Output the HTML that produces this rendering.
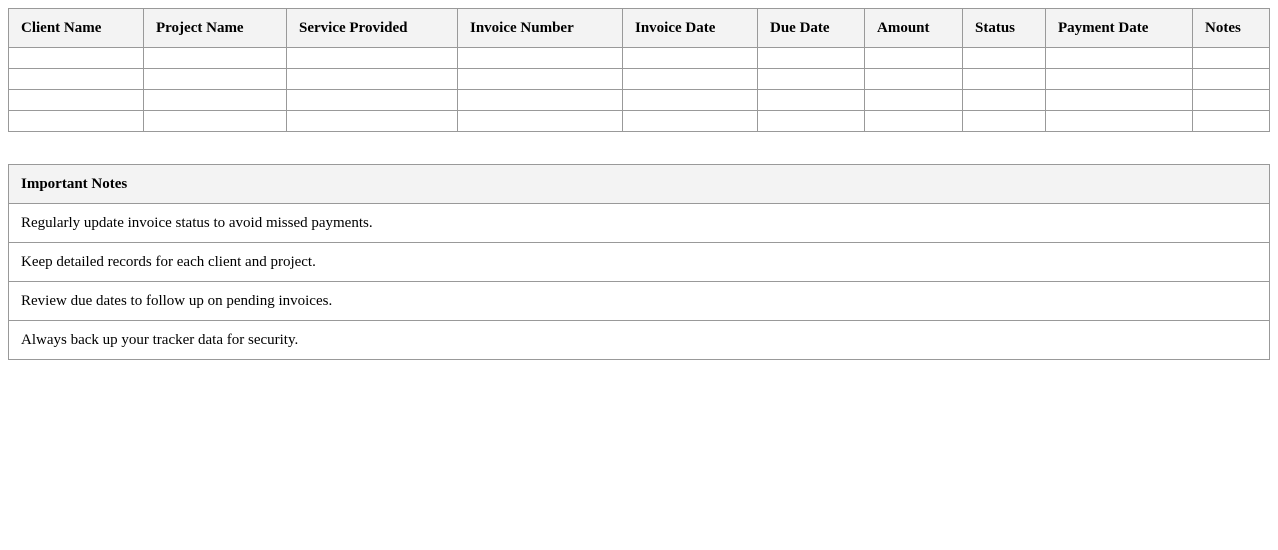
<!DOCTYPE html>
<html><head><meta charset="utf-8"><style>
body{margin:8px;font-family:"Liberation Serif",serif;font-size:15px;color:#000;background:#fff}
table{border-collapse:collapse;width:1261px;table-layout:fixed}
td,th{border:1px solid #999;padding:1px 12px 0;text-align:left;}
th{background:#f3f3f3;font-weight:bold;height:37px}
.t1 td{height:20px;padding:0}
.t2{margin-top:32px;width:1262px}
.t2 td{height:37px}
</style></head><body>
<table class="t1">
<colgroup><col style="width:135px"><col style="width:143px"><col style="width:171px"><col style="width:165px"><col style="width:135px"><col style="width:107px"><col style="width:98px"><col style="width:83px"><col style="width:147px"><col style="width:77px"></colgroup>
<tr><th>Client Name</th><th>Project Name</th><th>Service Provided</th><th>Invoice Number</th><th>Invoice Date</th><th>Due Date</th><th>Amount</th><th>Status</th><th>Payment Date</th><th>Notes</th></tr>
<tr><td></td><td></td><td></td><td></td><td></td><td></td><td></td><td></td><td></td><td></td></tr>
<tr><td></td><td></td><td></td><td></td><td></td><td></td><td></td><td></td><td></td><td></td></tr>
<tr><td></td><td></td><td></td><td></td><td></td><td></td><td></td><td></td><td></td><td></td></tr>
<tr><td></td><td></td><td></td><td></td><td></td><td></td><td></td><td></td><td></td><td></td></tr>
</table>
<table class="t2">
<tr><th>Important Notes</th></tr>
<tr><td>Regularly update invoice status to avoid missed payments.</td></tr>
<tr><td>Keep detailed records for each client and project.</td></tr>
<tr><td>Review due dates to follow up on pending invoices.</td></tr>
<tr><td>Always back up your tracker data for security.</td></tr>
</table>
</body></html>
